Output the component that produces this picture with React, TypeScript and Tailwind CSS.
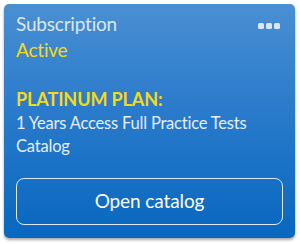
import React from "react";

function MoreDots() {
  return (
    <div className="flex gap-[2px] pt-[12px]">
      <span className="h-[6px] w-[6px] rounded-[1.5px] bg-[#dbe7f5]" />
      <span className="h-[6px] w-[6px] rounded-[1.5px] bg-[#dbe7f5]" />
      <span className="h-[6px] w-[6px] rounded-[1.5px] bg-[#dbe7f5]" />
    </div>
  );
}

export default function App() {
  return (
    <div className="h-[244px] w-[300px] bg-white p-1 font-['Lato',sans-serif]">
      <div className="flex h-[234px] w-[291px] flex-col rounded-[5px] bg-[linear-gradient(180deg,#4a8fd3_0%,#2a7bcb_45%,#0767bf_100%)] px-3 pt-[7px] shadow-[0_2px_3px_rgba(0,0,0,0.35)]">
        <div className="flex items-start justify-between pr-[3px]">
          <div>
            <div className="text-[19px] leading-[26px] tracking-[-0.2px] text-[#dce7f4]">Subscription</div>
            <div className="text-[19px] leading-[26px] tracking-[-0.2px] text-[#f7d914]">Active</div>
          </div>
          <MoreDots />
        </div>
        <div className="mt-[24px] text-[18px] font-bold leading-[24px] tracking-[-0.1px] text-[#f7d914]">PLATINUM PLAN:</div>
        <div className="mt-[1px] text-[16.5px] leading-[23px] tracking-[-0.2px] text-[#e6eef8]">1 Years Access Full Practice Tests Catalog</div>
        <button className="mt-[20px] flex h-[47px] w-[267px] items-center justify-center rounded-[8px] border border-[#dfe9f6] text-[19px] tracking-[-0.1px] text-white">
          Open catalog
        </button>
      </div>
    </div>
  );
}
